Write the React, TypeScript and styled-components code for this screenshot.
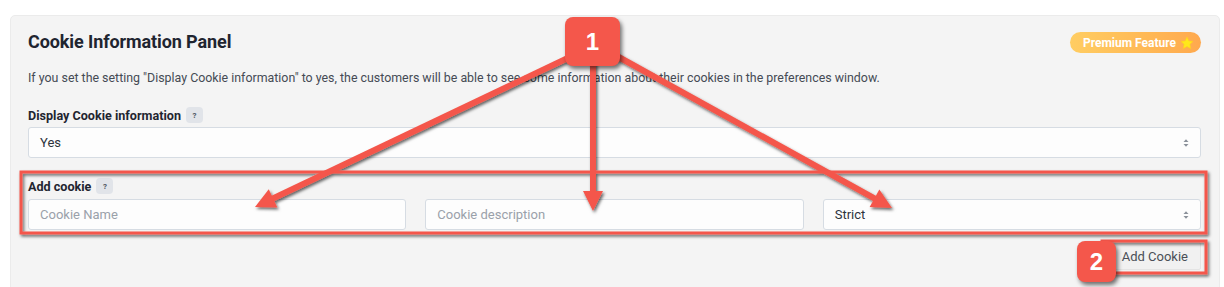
import React from "react";
import styled, { createGlobalStyle } from "styled-components";

const Global = createGlobalStyle`
  html, body { margin: 0; padding: 0; background: #ffffff; }
  body { font-family: Roboto, "Liberation Sans", Arial, sans-serif; color: #333; }
  * { box-sizing: border-box; }
`;

const Page = styled.div`
  position: relative;
  width: 1224px;
  height: 287px;
  overflow: hidden;
  padding: 15px 4px 0 10px;
`;

const Panel = styled.section`
  background: #f4f4f4;
  border: 1px solid #ebebeb;
  border-radius: 5px;
  height: 290px;
  padding: 13px 18px 0 17px;
  display: flex;
  flex-direction: column;
`;

const TitleRow = styled.div`
  display: flex;
  align-items: center;
  justify-content: space-between;
  height: 24px;
`;

const Title = styled.h2`
  margin: 0;
  font-size: 18px;
  font-weight: 700;
  color: #1f2530;
  letter-spacing: -0.1px;
`;

const Premium = styled.span`
  display: inline-flex;
  align-items: center;
  gap: 4px;
  height: 21px;
  padding: 0 7px 0 13px;
  border-radius: 11px;
  background: linear-gradient(90deg, #ffcd62 0%, #ffb855 60%, #ffa94e 100%);
  color: #fff;
  font-size: 12px;
  font-weight: 700;
  margin-top: 3px;
`;

const Desc = styled.p`
  margin: 15px 0 0;
  font-size: 12.4px;
  line-height: 20px;
  color: #454b54;
`;

const Label = styled.div<{ $top: number }>`
  display: flex;
  align-items: center;
  gap: 5px;
  margin-top: ${(p) => p.$top}px;
  height: 18px;
  font-size: 12.6px;
  font-weight: 700;
  color: #1f2530;
`;

const Help = styled.span`
  display: inline-flex;
  align-items: center;
  justify-content: center;
  width: 17px;
  height: 16px;
  border-radius: 4px;
  background: #e1e4e9;
  color: #4d5561;
  font-size: 8px;
  font-weight: 700;
`;

const Field = styled.div<{ $top: number }>`
  margin-top: ${(p) => p.$top}px;
  height: 31px;
  background: #fdfdfd;
  border: 1px solid #d6dce3;
  border-radius: 3px;
  display: flex;
  align-items: center;
  justify-content: space-between;
  padding: 0 10px 0 11px;
  font-size: 13px;
  color: #2d333b;
`;

const Placeholder = styled.span`
  color: #9aa1aa;
`;

const Row = styled.div`
  display: grid;
  grid-template-columns: 1fr 1fr 1fr;
  gap: 19px;
  margin-top: 4px;
`;

const Actions = styled.div`
  display: flex;
  justify-content: flex-end;
  margin-top: 12px;
`;

const Button = styled.button`
  height: 28px;
  padding: 0 12px;
  border: 1px solid #e4e4e4;
  border-radius: 2px;
  background: #f1f1f1;
  color: #4a4f57;
  font-family: inherit;
  font-size: 13px;
`;

const Overlay = styled.svg`
  position: absolute;
  left: 0;
  top: 0;
  pointer-events: none;
`;

const Marker = styled.div<{ $x: number; $y: number; $w: number; $h: number }>`
  position: absolute;
  left: ${(p) => p.$x}px;
  top: ${(p) => p.$y}px;
  width: ${(p) => p.$w}px;
  height: ${(p) => p.$h}px;
  border-radius: 8px;
  background: #f4574b;
  box-shadow: 2px 3px 4px rgba(0, 0, 0, 0.55);
  color: #fff;
  font-family: "Liberation Sans", Arial, sans-serif;
  font-weight: 700;
  font-size: 24px;
  display: flex;
  align-items: center;
  justify-content: center;
`;

const Chevrons = () => (
  <svg width="8" height="12" viewBox="0 0 8 12">
    <path d="M1.5 5 L4 2.3 L6.5 5 Z" fill="#8a9099" />
    <path d="M1.5 7 L4 9.7 L6.5 7 Z" fill="#8a9099" />
  </svg>
);

const Star = () => (
  <svg width="14" height="14" viewBox="0 0 24 24">
    <path
      d="M12 1.8l3.1 6.6 7.1.9-5.2 5 1.3 7.1L12 18l-6.3 3.4 1.3-7.1-5.2-5 7.1-.9z"
      fill="#ffe81a"
      stroke="#ffd21a"
      strokeWidth="1"
      strokeLinejoin="round"
    />
  </svg>
);

const RED = "#f4574b";

function Arrow({ x1, y1, x2, y2 }: { x1: number; y1: number; x2: number; y2: number }) {
  const dx = x2 - x1;
  const dy = y2 - y1;
  const len = Math.hypot(dx, dy);
  const ux = dx / len;
  const uy = dy / len;
  const head = 20;
  const half = 10;
  const bx = x2 - ux * head;
  const by = y2 - uy * head;
  const px = -uy;
  const py = ux;
  const pts = `${x2},${y2} ${bx + px * half},${by + py * half} ${bx - px * half},${by - py * half}`;
  return (
    <g>
      <line x1={x1} y1={y1} x2={bx + ux * 2} y2={by + uy * 2} stroke={RED} strokeWidth={6} />
      <polygon points={pts} fill={RED} />
    </g>
  );
}

export default function App() {
  return (
    <>
      <Global />
      <Page>
        <Panel>
          <TitleRow>
            <Title>Cookie Information Panel</Title>
            <Premium>
              Premium Feature <Star />
            </Premium>
          </TitleRow>
          <Desc>
            If you set the setting "Display Cookie information" to yes, the customers will be able to see some
            information about their cookies in the preferences window.
          </Desc>
          <Label $top={18}>
            Display Cookie information <Help>?</Help>
          </Label>
          <Field $top={3}>
            <span>Yes</span>
            <Chevrons />
          </Field>
          <Label $top={19}>
            Add cookie <Help>?</Help>
          </Label>
          <Row>
            <Field $top={0}>
              <Placeholder>Cookie Name</Placeholder>
            </Field>
            <Field $top={0}>
              <Placeholder>Cookie description</Placeholder>
            </Field>
            <Field $top={0}>
              <span>Strict</span>
              <Chevrons />
            </Field>
          </Row>
          <Actions>
            <Button>Add Cookie</Button>
          </Actions>
        </Panel>

        <Overlay width="1224" height="287" viewBox="0 0 1224 287">
          <defs>
            <filter id="sh" x="-10%" y="-10%" width="120%" height="140%">
              <feDropShadow dx="1.5" dy="2" stdDeviation="1.5" floodColor="#000" floodOpacity="0.6" />
            </filter>
          </defs>
          <g filter="url(#sh)">
            <rect x="21" y="172" width="1185" height="61" fill="none" stroke={RED} strokeWidth="3" />
            <rect x="1102" y="241" width="104" height="32" fill="none" stroke={RED} strokeWidth="3" />
            <Arrow x1={572} y1={56} x2={255} y2={207} />
            <Arrow x1={593} y1={60} x2={593} y2={211} />
            <Arrow x1={615} y1={55} x2={892} y2={208} />
          </g>
        </Overlay>
        <Marker $x={565} $y={17} $w={55} $h={49}>1</Marker>
        <Marker $x={1077} $y={241} $w={39} $h={41}>2</Marker>
      </Page>
    </>
  );
}
